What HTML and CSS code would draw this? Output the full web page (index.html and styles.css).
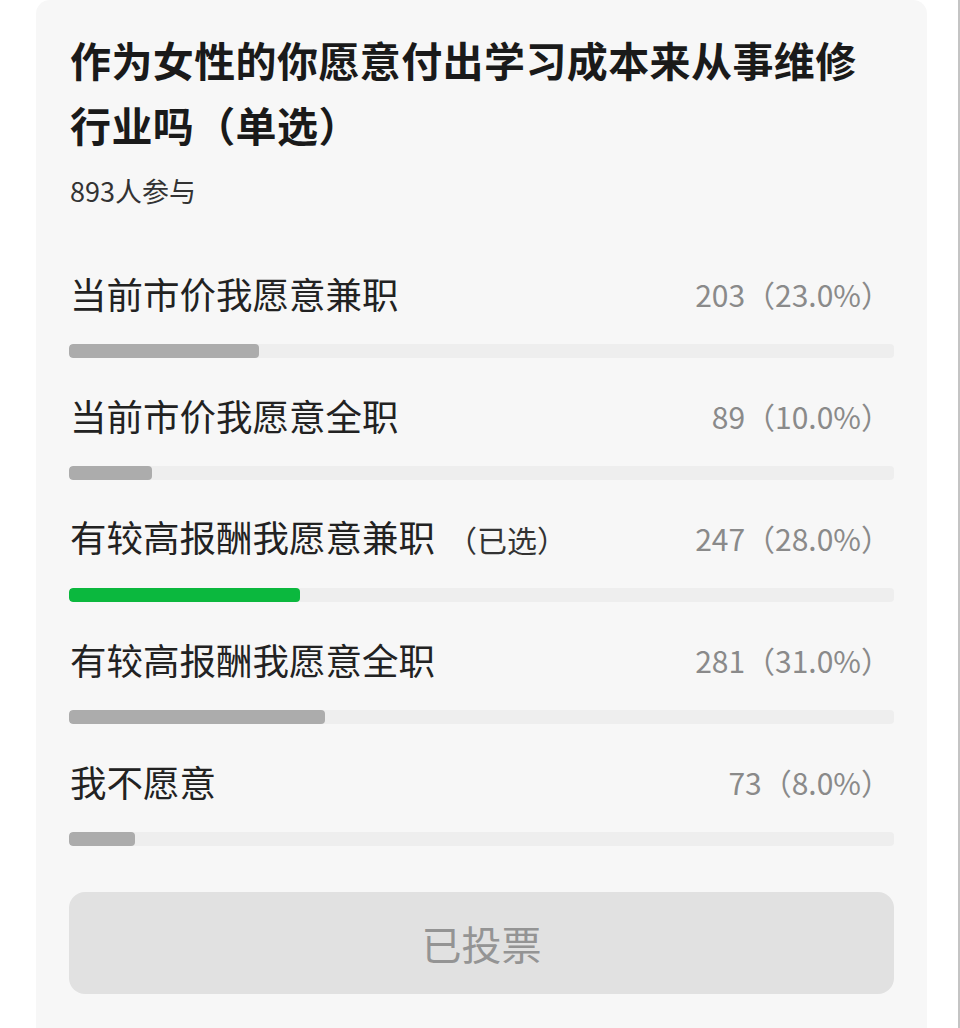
FILE: index.html
```html
<!DOCTYPE html>
<html>
  <head>
    <title>投票</title>
    <meta charset="utf-8">
    <link rel="stylesheet" href="styles.css">
  </head>
  <body>
    <div class="page">
      <div class="card">
        <div class="title">作为女性的你愿意付出学习成本来从事维修行业吗（单选）</div>
        <div class="count">893人参与</div>

        <div class="options">
          <div class="option">
            <div class="row">
              <span class="label">当前市价我愿意兼职</span>
              <span class="votes">203（23.0%）</span>
            </div>
            <div class="track"><div class="fill" style="width: 23%"></div></div>
          </div>
          <div class="option">
            <div class="row">
              <span class="label">当前市价我愿意全职</span>
              <span class="votes">89（10.0%）</span>
            </div>
            <div class="track"><div class="fill" style="width: 10%"></div></div>
          </div>
          <div class="option">
            <div class="row">
              <span class="label">有较高报酬我愿意兼职<span class="chosen">（已选）</span></span>
              <span class="votes">247（28.0%）</span>
            </div>
            <div class="track"><div class="fill mine" style="width: 28%"></div></div>
          </div>
          <div class="option">
            <div class="row">
              <span class="label">有较高报酬我愿意全职</span>
              <span class="votes">281（31.0%）</span>
            </div>
            <div class="track"><div class="fill" style="width: 31%"></div></div>
          </div>
          <div class="option">
            <div class="row">
              <span class="label">我不愿意</span>
              <span class="votes">73（8.0%）</span>
            </div>
            <div class="track"><div class="fill" style="width: 8%"></div></div>
          </div>
        </div>

        <div class="voted">已投票</div>
      </div>
    </div>
  </body>
</html>
```

FILE: styles.css
```css
html, body {
  margin: 0;
  padding: 0;
  background: #ffffff;
}
body {
  font-family: "Noto Sans CJK SC", "Noto Sans", sans-serif;
  color: #1f1f1f;
}
.page {
  width: 960px;
  height: 1028px;
  box-sizing: border-box;
  border-right: 2px solid #c4c4c4;
  overflow: hidden;
}
.card {
  margin-left: 36px;
  width: 891px;
  height: 1100px;
  box-sizing: border-box;
  background: #f7f7f7;
  border-radius: 14px;
  padding: 27px 33px 0 33px;
}
.title {
  font-size: 41px;
  line-height: 65px;
  font-weight: bold;
  color: #1a1a1a;
  padding-left: 1px;
  letter-spacing: 0.4px;
}
.count {
  margin-top: 14px;
  font-size: 27px;
  line-height: 40px;
  color: #333333;
  padding-left: 1px;
}
.options {
  margin-top: 59px;
  display: flex;
  flex-direction: column;
  gap: 34px;
}
.row {
  display: flex;
  justify-content: space-between;
  align-items: center;
  height: 48px;
  padding: 0 3px 0 1px;
}
.label {
  font-size: 36.5px;
  line-height: 48px;
  color: #222222;
}
.chosen {
  font-size: 30px;
  margin-left: 12px;
  color: #333333;
}
.votes {
  font-size: 30px;
  color: #8a8a8a;
}
.track {
  margin-top: 26px;
  height: 14px;
  border-radius: 4px;
  background: #eeeeee;
  overflow: hidden;
}
.fill {
  height: 100%;
  border-radius: 4px;
  background: #acacac;
}
.fill.mine {
  background: #0bb83e;
}
.voted {
  margin-top: 46px;
  height: 102px;
  border-radius: 16px;
  background: #e1e1e1;
  color: #949494;
  font-size: 40px;
  display: flex;
  align-items: center;
  justify-content: center;
}
```
